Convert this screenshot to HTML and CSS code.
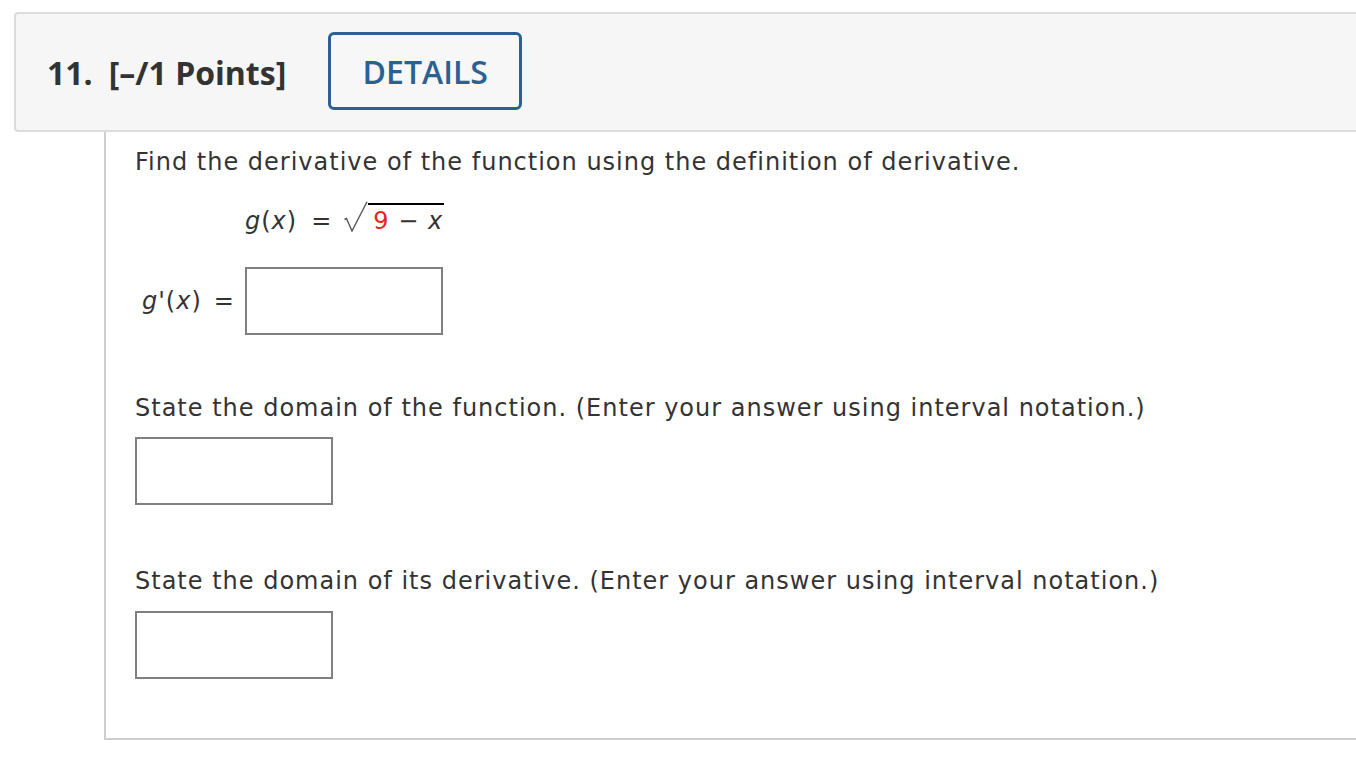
FILE: index.html
```html
<!DOCTYPE html>
<html>
<head>
<meta charset="utf-8">
<link rel="stylesheet" href="styles.css">
</head>
<body>
<div class="question">
  <div class="qhead">
    <span class="qnum">11.</span>
    <span class="qpts">[–/1 Points]</span>
    <button class="details">DETAILS</button>
  </div>
  <div class="qbody">
    <p class="prompt first">Find the derivative of the function using the definition of derivative.</p>
    <div class="eq"><span class="it">g</span>(<span class="it">x</span>)<span class="op">=</span><svg class="rad" width="24" height="31" viewBox="0 0 24 31"><path d="M0.5 18.5 L2.5 17.5 L8 30 L23 0.8" fill="none" stroke="#555" stroke-width="1.4"/></svg><span class="radicand"><span class="red">9</span> − <span class="it">x</span></span></div>
    <div class="answer-row">
      <span class="lbl"><span class="it">g</span>'(<span class="it">x</span>)<span class="op">=</span></span>
      <span class="box"></span>
    </div>
    <p class="prompt second">State the domain of the function. (Enter your answer using interval notation.)</p>
    <span class="box"></span>
    <p class="prompt third">State the domain of its derivative. (Enter your answer using interval notation.)</p>
    <span class="box"></span>
  </div>
</div>
</body>
</html>
```
FILE: styles.css
```css
html, body {
  margin: 0;
  padding: 0;
  background: #fff;
}
.question {
  padding-top: 12px;
}
.qhead {
  margin-left: 14px;
  height: 116px;
  border: 2px solid #dcdcdc;
  border-right: none;
  border-radius: 4px 0 0 4px;
  background: #f6f6f6;
  display: flex;
  align-items: center;
  padding-left: 31px;
  font-family: "Open Sans", sans-serif;
  font-weight: 700;
  font-size: 32px;
  color: #333;
}
.qnum {
  margin-right: 16px;
}
.qpts {
  margin-right: 42px;
}
.details {
  width: 194px;
  height: 78px;
  border: 3px solid #2a6194;
  border-radius: 6px;
  background: #f7f7f7;
  color: #2a6194;
  font-family: "Open Sans", sans-serif;
  font-weight: 600;
  font-size: 32px;
  padding: 0;
  margin-top: -2px;
}
.qbody {
  margin-left: 104px;
  border-left: 2px solid #cecece;
  border-bottom: 2px solid #cecece;
  padding-left: 29px;
  height: 606px;
  font-family: "DejaVu Sans", Verdana, sans-serif;
  font-size: 24px;
  letter-spacing: 1px;
  color: #333;
  overflow: hidden;
}
.prompt {
  margin: 0;
  line-height: 32px;
}
.prompt.first {
  margin-top: 14px;
}
.eq {
  margin-left: 110px;
  margin-top: 23px;
  line-height: 40px;
  height: 40px;
  white-space: pre;
}
.it {
  font-style: italic;
}
.op {
  margin: 0 12px 0 14px;
}
.rad {
  display: inline-block;
  vertical-align: -3px;
}
.radicand {
  display: inline-block;
  border-top: 2px solid #000;
  line-height: 26px;
  padding-top: 3px;
  padding-left: 5px;
  padding-right: 1px;
}
.red {
  color: #e8251b;
}
.answer-row {
  margin-top: 26px;
  display: flex;
  align-items: center;
  white-space: pre;
  line-height: 32px;
}
.lbl {
  width: 110px;
  padding-left: 7px;
  box-sizing: border-box;
}
.lbl .op {
  margin: 0 0 0 12px;
}
.box {
  display: block;
  width: 198px;
  height: 68px;
  box-sizing: border-box;
  border: 2px solid #808080;
  background: #fff;
}
.prompt.second {
  margin-top: 57px;
  margin-bottom: 13px;
}
.prompt.third {
  margin-top: 60px;
  margin-bottom: 14px;
}
```
